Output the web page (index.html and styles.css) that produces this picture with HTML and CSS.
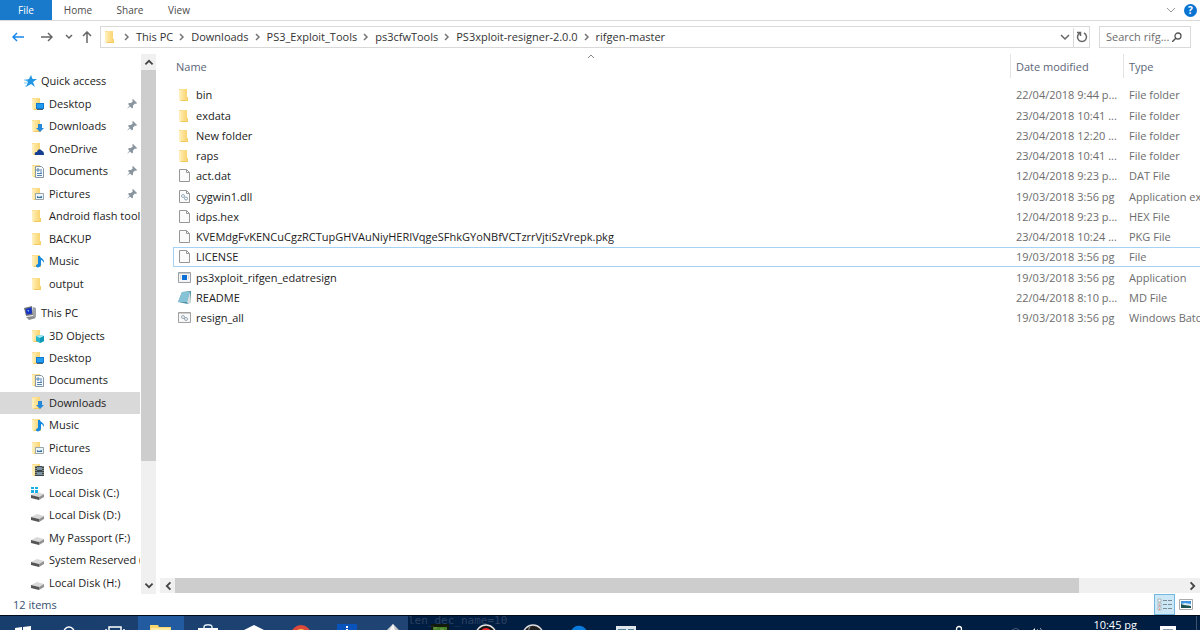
FILE: index.html
```html
<!DOCTYPE html>
<html lang="en">
<head>
    <meta charset="UTF-8">
    <meta name="viewport" content="width=device-width, initial-scale=1.0">
    <title>rifgen-master</title>
    <link rel="stylesheet" href="styles.css">
</head>
<body>
    <!-- shared icons -->
    <svg class="sprite" aria-hidden="true">
        <defs>
            <linearGradient id="gold" x1="0" x2="1"><stop offset="0" stop-color="#ffe9a6"/><stop offset="1" stop-color="#f8d169"/></linearGradient>
            <linearGradient id="steel" x1="0" y1="0" x2="1" y2="1"><stop offset="0" stop-color="#f2f2f2"/><stop offset="1" stop-color="#a5a5a5"/></linearGradient>
        </defs>
        <symbol id="folder" viewBox="0 0 14 14"><path d="M1 1h8v8h1v4H2z" fill="#f3c85c"/><path d="M3 1h6v8h1v3H3z" fill="url(#gold)"/><path d="M1 1l2 1v11l-2-1z" fill="#ffeeb8"/></symbol>
        <symbol id="desktop" viewBox="0 0 14 14"><use href="#folder"/><path d="M5 6h8v6H5z" fill="#1279cf"/><path d="M6 7h6v4H6z" fill="#1f9bf0"/><path d="M6 12h6v1H6z" fill="#47637a"/></symbol>
        <symbol id="downloads" viewBox="0 0 14 14"><use href="#folder"/><path d="M7 5h4v4h2l-4 4-4-4h2z" fill="#2588d8"/></symbol>
        <symbol id="onedrive" viewBox="0 0 14 14"><use href="#folder"/><path d="M4 13c-1-3 1-3 2-3 1-4 4-3 5-1 2 0 2 3 2 4z" fill="#173f91"/></symbol>
        <symbol id="documents" viewBox="0 0 14 14"><use href="#folder"/><path d="M4.500 2.500h6l2 2v9h-8z" fill="#f7fafc" stroke="#8797a5"/><path d="M6 5h2v2H6zM9 6h2M9 8h2M6 9.500h5M6 11.500h5" fill="none" stroke="#5684b4"/></symbol>
        <symbol id="pictures" viewBox="0 0 14 14"><use href="#folder"/><path d="M4.500 6.500h8v6h-8z" fill="#eaf5fc" stroke="#9aa5ab"/><path d="M6 11V9l2 1 3-1v2z" fill="#3a719a"/></symbol>
        <symbol id="music" viewBox="0 0 14 14"><use href="#folder"/><path d="M7 2h2c0 2 5 3 4 7-1-2-2-3-3-3v5c-1 3-5 3-5 1 0-1 1-2 2-2z" fill="#1688df"/></symbol>
        <symbol id="objects" viewBox="0 0 14 14"><use href="#folder"/><path d="M5 7l4-1 4 1v5l-4 2-4-2z" fill="#24b5cf"/><path d="M5 7l4-1 4 1-4 2z" fill="#a4ebf5"/><path d="M9 9l4-2v5l-4 2z" fill="#109ab8"/></symbol>
        <symbol id="videos" viewBox="0 0 14 14"><use href="#folder"/><path d="M4 3h9v10H4z" fill="#39444e"/><path d="M6 4h5v3H6zM6 9h5v3H6z" fill="#7993a4"/><path d="M5 3v10M12 3v10" stroke="#d9cf9c" stroke-dasharray="1 1"/></symbol>
        <symbol id="disk" viewBox="0 0 14 14"><path d="M0 9l6-3 7 2-5 3z" fill="#d9d9d9"/><path d="M0 9l8 2v3l-8-2z" fill="#555"/><path d="M8 11l5-3v3l-5 3z" fill="#929292"/></symbol>
        <symbol id="windisk" viewBox="0 0 14 14"><use href="#disk"/><path d="M0 1h3v2H0zM4 1h3v2H4zM0 4h3v3H0zM4 4h3v3H4z" fill="#17afe8"/></symbol>
        <symbol id="star" viewBox="0 0 14 14"><path d="M8 1l1.500 4H14l-4 3 2 5-4-3-5 3 2-5-3-2 4-1z" fill="#2196e5"/><path d="M1 6h4M1 9h3M2 12h2" stroke="#7fc6f2"/></symbol>
        <symbol id="pc" viewBox="0 0 14 14"><path d="M1 2l8-2 1 9-7 1z" fill="#6e7378"/><path d="M2.500 3l6-1.500.5 6-5.500 1z" fill="#1633c4"/><path d="M10 1l3 1v9l-3 1z" fill="#a2a5a8"/><path d="M3 11l7-1 3 2-7 2z" fill="#888c90"/><path d="M4 4l2 0v2z" fill="#7ec2ff"/></symbol>
        <symbol id="pin" viewBox="0 0 10 10"><path d="M6 0l4 4-1 1-1-.5-2 2v2l-1 1-2-2L0 10l2.500-3.500L1 5l1-1h2l2-2L5 1z" fill="#8a969f"/></symbol>
        <symbol id="page" viewBox="0 0 14 14"><path d="M1.500.5h7l3 3v9h-10z" fill="#fbfbfb" stroke="#979797"/><path d="M8.500.5v3h3" fill="none" stroke="#979797"/></symbol>
        <symbol id="dll" viewBox="0 0 14 14"><use href="#page"/><circle cx="5" cy="6" r="1.500" fill="none" stroke="#9aabb8"/><circle cx="8" cy="8.500" r="1.500" fill="none" stroke="#8da5b7"/></symbol>
        <symbol id="exe" viewBox="0 0 14 14"><path d="M.5 1.500h12v10H.5z" fill="#f4f4f4" stroke="#9aa0a4"/><path d="M1 2h11v1H1z" fill="#c2c9cf"/><path d="M4 4h5v5H4z" fill="#0b6fd6"/><path d="M10 5h1M10 7h1M2 5h1M2 7h1" stroke="#bbb"/></symbol>
        <symbol id="note" viewBox="0 0 14 14"><path d="M4 1l9-1v11l-3 2-10-2z" fill="#4b91a8"/><path d="M4 1l8 0-3 10-9 0z" fill="#86c3d6"/><path d="M12 1l1 10-3 2-1-2z" fill="#d9dfdf"/></symbol>
        <symbol id="batch" viewBox="0 0 14 14"><path d="M.5 1.500h12v10H.5z" fill="#f8f8f8" stroke="#a1a1a1"/><path d="M1 2h11v1H1z" fill="#cfcfcf"/><circle cx="5" cy="6" r="1.500" fill="none" stroke="#9aa8b3"/><circle cx="8" cy="8" r="1.500" fill="none" stroke="#9aa8b3"/></symbol>
        <symbol id="up" viewBox="0 0 10 10"><path d="M2 7l3-3 3 3" fill="none" stroke="currentColor" stroke-width="1.500"/></symbol>
        <symbol id="down" viewBox="0 0 10 10"><path d="M2 3l3 3 3-3" fill="none" stroke="currentColor" stroke-width="1.500"/></symbol>
        <symbol id="left" viewBox="0 0 10 10"><path d="M7 2L4 5l3 3" fill="none" stroke="currentColor" stroke-width="1.500"/></symbol>
        <symbol id="right" viewBox="0 0 10 10"><path d="M3 2l3 3-3 3" fill="none" stroke="currentColor" stroke-width="1.500"/></symbol>
    </svg>

    <header class="ribbon">
        <button class="tab tab-file">File</button>
        <button class="tab">Home</button>
        <button class="tab">Share</button>
        <button class="tab tab-view">View</button>
        <button class="expand" aria-label="Expand the ribbon"><svg viewBox="0 0 10 10"><path d="M1 3l4 4 4-4" fill="none" stroke="#999"/></svg></button>
        <button class="help" aria-label="Help">?</button>
    </header>

    <div class="toolbar">
        <div class="history">
            <button class="nav-btn back" aria-label="Back"><svg viewBox="0 0 12 12"><path d="M12 6H1M5 2L1 6l4 4" fill="none" stroke="currentColor" stroke-width="1.500"/></svg></button>
            <button class="nav-btn" aria-label="Forward"><svg viewBox="0 0 12 12"><path d="M0 6h11M7 2l4 4-4 4" fill="none" stroke="currentColor" stroke-width="1.500"/></svg></button>
            <button class="nav-btn recent" aria-label="Recent locations"><svg><use href="#down"/></svg></button>
            <button class="nav-btn" aria-label="Up"><svg viewBox="0 0 12 12"><path d="M6 12V1M2 5l4-4 4 4" fill="none" stroke="currentColor" stroke-width="1.500"/></svg></button>
        </div>
        <div class="address">
            <svg class="icon"><use href="#folder"/></svg>
            <nav class="crumbs" aria-label="Address">
                <svg class="sep"><use href="#right"/></svg><a href="#">This PC</a>
                <svg class="sep"><use href="#right"/></svg><a href="#">Downloads</a>
                <svg class="sep"><use href="#right"/></svg><a href="#">PS3_Exploit_Tools</a>
                <svg class="sep"><use href="#right"/></svg><a href="#">ps3cfwTools</a>
                <svg class="sep"><use href="#right"/></svg><a href="#">PS3xploit-resigner-2.0.0</a>
                <svg class="sep"><use href="#right"/></svg><a href="#">rifgen-master</a>
            </nav>
            <button class="address-btn" aria-label="Previous locations"><svg viewBox="0 0 10 10"><path d="M1 3l4 4 4-4" fill="none" stroke="#666" stroke-width="1.500"/></svg></button>
            <button class="address-btn refresh" aria-label="Refresh"><svg viewBox="0 0 12 12"><path d="M8 2a4.500 4.500 0 1 1-4 0M1 1.500h3.500V5" fill="none" stroke="#666" stroke-width="1.500"/></svg></button>
        </div>
        <div class="search">
            <input type="text" placeholder="Search rifg..." aria-label="Search rifgen-master">
            <svg viewBox="0 0 10 10"><circle cx="6" cy="4" r="3" fill="none" stroke="#555" stroke-width="1.300"/><path d="M4 6L0 10" stroke="#555" stroke-width="1.500"/></svg>
        </div>
    </div>

    <div class="window">
        <aside class="sidebar">
            <nav class="tree" aria-label="Folders">
                <ul class="group quick">
                    <li><a class="root" href="#"><svg class="icon"><use href="#star"/></svg>Quick access</a></li>
                    <li><a href="#"><svg class="icon"><use href="#desktop"/></svg>Desktop<svg class="pin"><use href="#pin"/></svg></a></li>
                    <li><a href="#"><svg class="icon"><use href="#downloads"/></svg>Downloads<svg class="pin"><use href="#pin"/></svg></a></li>
                    <li><a href="#"><svg class="icon"><use href="#onedrive"/></svg>OneDrive<svg class="pin"><use href="#pin"/></svg></a></li>
                    <li><a href="#"><svg class="icon"><use href="#documents"/></svg>Documents<svg class="pin"><use href="#pin"/></svg></a></li>
                    <li><a href="#"><svg class="icon"><use href="#pictures"/></svg>Pictures<svg class="pin"><use href="#pin"/></svg></a></li>
                    <li><a href="#"><svg class="icon"><use href="#folder"/></svg>Android flash tool</a></li>
                    <li><a href="#"><svg class="icon"><use href="#folder"/></svg>BACKUP</a></li>
                    <li><a href="#"><svg class="icon"><use href="#music"/></svg>Music</a></li>
                    <li><a href="#"><svg class="icon"><use href="#folder"/></svg>output</a></li>
                </ul>
                <ul class="group computer">
                    <li><a class="root" href="#"><svg class="icon"><use href="#pc"/></svg>This PC</a></li>
                    <li><a href="#"><svg class="icon"><use href="#objects"/></svg>3D Objects</a></li>
                    <li><a href="#"><svg class="icon"><use href="#desktop"/></svg>Desktop</a></li>
                    <li><a href="#"><svg class="icon"><use href="#documents"/></svg>Documents</a></li>
                    <li><a class="current" href="#"><svg class="icon"><use href="#downloads"/></svg>Downloads</a></li>
                    <li><a href="#"><svg class="icon"><use href="#music"/></svg>Music</a></li>
                    <li><a href="#"><svg class="icon"><use href="#pictures"/></svg>Pictures</a></li>
                    <li><a href="#"><svg class="icon"><use href="#videos"/></svg>Videos</a></li>
                    <li><a href="#"><svg class="icon"><use href="#windisk"/></svg>Local Disk (C:)</a></li>
                    <li><a href="#"><svg class="icon"><use href="#disk"/></svg>Local Disk (D:)</a></li>
                    <li><a href="#"><svg class="icon"><use href="#disk"/></svg>My Passport (F:)</a></li>
                    <li><a href="#"><svg class="icon"><use href="#disk"/></svg>System Reserved (G:)</a></li>
                    <li><a href="#"><svg class="icon"><use href="#disk"/></svg>Local Disk (H:)</a></li>
                </ul>
            </nav>
            <div class="scroll scroll-y">
                <button aria-label="Scroll up"><svg><use href="#up"/></svg></button>
                <div class="track"><div class="thumb"></div></div>
                <button aria-label="Scroll down"><svg><use href="#down"/></svg></button>
            </div>
        </aside>

        <main class="content">
            <table class="files">
                <colgroup><col><col class="col-date"><col class="col-type"></colgroup>
                <thead>
                    <tr>
                        <th>Name<svg class="sort" viewBox="0 0 8 5"><path d="M1 4l3-3 3 3" fill="none" stroke="#888"/></svg></th>
                        <th>Date modified</th>
                        <th>Type</th>
                    </tr>
                </thead>
                <tbody>
                    <tr><td><svg class="icon"><use href="#folder"/></svg>bin</td><td>22/04/2018 9:44 p...</td><td>File folder</td></tr>
                    <tr><td><svg class="icon"><use href="#folder"/></svg>exdata</td><td>23/04/2018 10:41 ...</td><td>File folder</td></tr>
                    <tr><td><svg class="icon"><use href="#folder"/></svg>New folder</td><td>23/04/2018 12:20 ...</td><td>File folder</td></tr>
                    <tr><td><svg class="icon"><use href="#folder"/></svg>raps</td><td>23/04/2018 10:41 ...</td><td>File folder</td></tr>
                    <tr><td><svg class="icon"><use href="#page"/></svg>act.dat</td><td>12/04/2018 9:23 p...</td><td>DAT File</td></tr>
                    <tr><td><svg class="icon"><use href="#dll"/></svg>cygwin1.dll</td><td>19/03/2018 3:56 pg</td><td>Application extension</td></tr>
                    <tr><td><svg class="icon"><use href="#page"/></svg>idps.hex</td><td>12/04/2018 9:23 p...</td><td>HEX File</td></tr>
                    <tr><td><svg class="icon"><use href="#page"/></svg>KVEMdgFvKENCuCgzRCTupGHVAuNiyHERIVqgeSFhkGYoNBfVCTzrrVjtiSzVrepk.pkg</td><td>23/04/2018 10:24 ...</td><td>PKG File</td></tr>
                    <tr class="focused"><td><svg class="icon"><use href="#page"/></svg>LICENSE</td><td>19/03/2018 3:56 pg</td><td>File</td></tr>
                    <tr><td><svg class="icon"><use href="#exe"/></svg>ps3xploit_rifgen_edatresign</td><td>19/03/2018 3:56 pg</td><td>Application</td></tr>
                    <tr><td><svg class="icon"><use href="#note"/></svg>README</td><td>22/04/2018 8:10 p...</td><td>MD File</td></tr>
                    <tr><td><svg class="icon"><use href="#batch"/></svg>resign_all</td><td>19/03/2018 3:56 pg</td><td>Windows Batch File</td></tr>
                </tbody>
            </table>
            <div class="scroll scroll-x">
                <button aria-label="Scroll left"><svg><use href="#left"/></svg></button>
                <div class="track"><div class="thumb"></div></div>
                <button aria-label="Scroll right"><svg><use href="#right"/></svg></button>
            </div>
        </main>
    </div>

    <footer class="status">
        <span>12 items</span>
        <button class="view active" aria-label="Details view"><svg viewBox="0 0 16 14"><path d="M1 1h3v3H1zM1 5h3v3H1zM1 9h3v3H1z" fill="#fff" stroke="#a9b4ba"/><path d="M2 7h1M2 11h1" stroke="#d65f4e"/><path d="M6 2.500h4M11 2.500h4M6 6.500h4M11 6.500h4M6 10.500h4M11 10.500h4" stroke="#7c8d97"/></svg></button>
        <button class="view" aria-label="Large icons view"><svg viewBox="0 0 16 14"><path d="M1.500 1.500h13v10h-13z" fill="#fff" stroke="#aaa"/><path d="M3 3h10v7H3z" fill="#3e93dc"/><path d="M3 6l4-1 6 1v2H3z" fill="#d5eefa"/><path d="M3 6l3 1 7 1v2H3z" fill="#1e514f"/></svg></button>
    </footer>

    <div class="taskbar">
        <div class="system">
            <button aria-label="Start"><svg viewBox="0 0 24 24"><path d="M4 4l7-1v8H4zM12 3l8-1v9h-8z" fill="#fff"/></svg></button>
            <button aria-label="Search"><svg viewBox="0 0 24 24"><circle cx="12" cy="8" r="5" fill="none" stroke="#fff" stroke-width="1.500"/></svg></button>
            <button aria-label="Task view"><svg viewBox="0 0 24 24"><path d="M6 3h12v10H6zM3 5v7M21 5v7" fill="none" stroke="#fff" stroke-width="1.500"/></svg></button>
        </div>
        <div class="apps">
            <button class="open" aria-label="File Explorer"><svg viewBox="0 0 24 24"><path d="M1 1h8l1 2h12v12H1z" fill="#f8d66e"/><path d="M2 4h19v10H2z" fill="#ffeaa3"/></svg></button>
            <button aria-label="Store"><svg viewBox="0 0 24 24"><path d="M8 5V3c0-3 8-3 8 0v2" fill="none" stroke="#dce8f3" stroke-width="1.500"/><path d="M2 4h20v12H2z" fill="#fff"/></svg></button>
            <button aria-label="Packages"><svg viewBox="0 0 24 24"><path d="M2 6l10-5 10 5v10H2z" fill="#fff"/></svg></button>
            <button aria-label="Chrome"><svg viewBox="0 0 24 24"><circle cx="12" cy="11" r="10" fill="#df493c"/><circle cx="12" cy="11" r="6" fill="#f5d052"/><circle cx="12" cy="12" r="5" fill="#f5f5f5"/></svg></button>
            <button aria-label="Information"><svg viewBox="0 0 24 24"><path d="M2 0h20v20H2z" fill="#0953bd"/><path d="M11 2h2v2h-2zM11 5h2v9h-2z" fill="#fff"/></svg></button>
            <button aria-label="Utility"><svg viewBox="0 0 24 24"><path d="M12 0l10 10H2z" fill="url(#steel)"/><path d="M12 0l3 10H7z" fill="#f6f6f6"/></svg></button>
            <button aria-label="Game"><svg viewBox="0 0 24 24"><path d="M3 0h18v18H3z" fill="#121a0c"/><path d="M5 3h14v4H5z" fill="#467d29"/><path d="M5 7h3v3h3V7h3v4h5v5H5z" fill="#69472b"/><path d="M6 4h3M12 5h4" stroke="#71a54c"/></svg></button>
            <button aria-label="Recorder"><svg viewBox="0 0 24 24"><circle cx="12" cy="11" r="10" fill="#141414" stroke="#e4e4e4" stroke-width="1.500"/><circle cx="12" cy="10" r="6" fill="#ee2b2b"/></svg></button>
            <button aria-label="Studio"><svg viewBox="0 0 24 24"><circle cx="12" cy="11" r="10" fill="#202020" stroke="#ddd" stroke-width="1.500"/><path d="M9 3c-3 3 0 7 4 7" fill="none" stroke="#aaa"/></svg></button>
            <button aria-label="Edge"><svg viewBox="0 0 24 24"><path d="M3 11c1-13 18-12 18 1H9c0-7 7-5 7-2" fill="#087bdc"/></svg></button>
            <button aria-label="Console"><svg viewBox="0 0 24 24"><path d="M2 2h20v16H2z" fill="#dfe6eb"/><path d="M4 5h8v4H4zM14 5h6v8h-6z" fill="#51809d"/></svg></button>
        </div>
        <span class="wallpaper">len_dec_name=10</span>
        <div class="tray">
            <svg class="tray-icon people" viewBox="0 0 16 16"><circle cx="8" cy="5" r="2.500" fill="none" stroke="#fff" stroke-width="1.300"/><path d="M3 13c0-5 10-5 10 0" fill="none" stroke="#fff"/></svg>
            <svg class="tray-icon" viewBox="0 0 16 16"><path d="M4 7c3-3 6-3 8-1M6 9c2-2 4-2 5 0" fill="none" stroke="#53647d"/></svg>
            <svg class="tray-icon" viewBox="0 0 16 16"><path d="M2 7h2l3-3v8L4 9H2z" fill="#fff"/><path d="M9 5c2 2 2 3 0 5M12 4c2 2 2 4 0 7" fill="none" stroke="#aab4c3"/></svg>
            <time class="clock">10:45 pg</time>
            <button class="notices" aria-label="Notifications"><svg viewBox="0 0 16 16"><path d="M0 2h16v14H0z" fill="#fff"/><path d="M3 6h10M3 9h10" stroke="#203b5d"/></svg></button>
        </div>
    </div>
</body>
</html>
```
FILE: styles.css
```css
* {
    box-sizing: border-box;
}
body {
    margin: 0;
    height: 100vh;
    display: flex;
    flex-direction: column;
    overflow: hidden;
    background: #fff;
    color: #1c1c1c;
    font-family: "Open Sans", "Noto Sans", sans-serif;
    font-size: 11px;
    line-height: 20px;
}
button {
    display: flex;
    align-items: center;
    justify-content: center;
    padding: 0;
    border: 0;
    background: none;
    color: inherit;
    font: inherit;
}
a {
    color: inherit;
    text-decoration: none;
}
svg {
    flex: none;
    display: block;
}
.sprite {
    position: absolute;
    width: 0;
    height: 0;
}
.icon {
    width: 14px;
    height: 14px;
}

/* ribbon */
.ribbon {
    display: flex;
    align-items: center;
    height: 21px;
    flex: none;
    padding-right: 3px;
    border-bottom: 1px solid #dadada;
}
.tab {
    width: 52px;
    height: 20px;
    color: #4b4b4b;
    font-size: 10px;
}
.tab-file {
    background: #1979ca;
    color: #fff;
}
.tab-view {
    width: 46px;
}
.expand {
    width: 10px;
    margin-left: auto;
    margin-right: 8px;
}
.expand svg {
    width: 10px;
    height: 10px;
}
.help {
    width: 13px;
    height: 13px;
    border-radius: 50%;
    background: #0873d1;
    color: #fff;
    font-size: 10px;
    font-weight: bold;
    line-height: 12px;
}

/* navigation and address */
.toolbar {
    display: flex;
    flex: none;
    height: 33px;
    padding: 5px 9px 6px 0;
}
.history {
    display: flex;
    align-items: center;
    width: 100px;
    padding-left: 12px;
    gap: 17px;
    color: #666;
}
.nav-btn svg {
    width: 12px;
    height: 12px;
}
.back {
    color: #1685ec;
}
.nav-btn.recent svg {
    width: 10px;
    height: 10px;
}
.recent {
    margin: 0 -10px 0 -6px;
}
.address {
    display: flex;
    flex: 1;
    align-items: center;
    min-width: 0;
    border: 1px solid #d9d9d9;
    padding-left: 3px;
}
.crumbs {
    display: flex;
    flex: 1;
    align-items: center;
    overflow: hidden;
    white-space: nowrap;
    color: #333;
}
.sep {
    width: 10px;
    height: 10px;
    margin: 0 4px;
    color: #777;
}
.address-btn {
    width: 16px;
    height: 19px;
}
.address-btn svg {
    width: 10px;
    height: 10px;
}
.refresh {
    border-left: 1px solid #d9d9d9;
}
.refresh svg {
    width: 12px;
    height: 12px;
}
.search {
    display: flex;
    align-items: center;
    width: 92px;
    margin-left: 9px;
    padding: 0 8px 0 6px;
    border: 1px solid #d9d9d9;
}
.search input {
    flex: 1;
    min-width: 0;
    padding: 0;
    border: 0;
    outline: 0;
    font: inherit;
}
.search input::placeholder {
    color: #6d6d6d;
}
.search svg {
    width: 10px;
    height: 10px;
}

/* folder tree */
.window {
    display: flex;
    flex: 1;
    min-height: 0;
}
.sidebar {
    display: flex;
    width: 156px;
    flex: none;
}
.tree {
    display: flex;
    flex-direction: column;
    flex: 1;
    min-width: 0;
    gap: 7px;
    padding-top: 16px;
}
.group {
    display: flex;
    flex-direction: column;
    margin: 0;
    padding: 0;
    list-style: none;
}
.quick {
    flex: 10 1 0;
}
.computer {
    flex: 13 1 0;
}
.group li {
    flex: 1 1 0;
    min-height: 0;
}
.group a {
    display: flex;
    align-items: center;
    gap: 4px;
    height: 100%;
    margin-right: 1px;
    padding-left: 31px;
    overflow: hidden;
    white-space: nowrap;
}
.group .root {
    padding-left: 23px;
}
.group .current {
    background: #d9d9d9;
}
.pin {
    width: 10px;
    height: 10px;
    margin-left: auto;
    margin-right: 3px;
}

/* scroll bars */
.scroll {
    display: flex;
    flex: none;
    background: #f0f0f0;
    color: #444;
}
.scroll svg {
    width: 12px;
    height: 12px;
}
.track {
    flex: 1;
}
.thumb {
    background: #cdcdcd;
}
.scroll-y {
    flex-direction: column;
    width: 15px;
}
.scroll-y button {
    height: 16px;
}
.scroll-y .thumb {
    height: 77%;
}
.scroll-x {
    height: 15px;
    margin: auto 0 1px 4px;
}
.scroll-x button {
    width: 15px;
}
.scroll-x .thumb {
    width: 89.5%;
    height: 100%;
}

/* file list */
.content {
    display: flex;
    flex-direction: column;
    flex: 1;
    min-width: 0;
}
.files {
    width: calc(100% - 17px);
    margin-left: 17px;
    table-layout: fixed;
    border-collapse: separate;
    border-spacing: 0;
}
.col-date {
    width: 113px;
}
.col-type {
    width: 77px;
}
.files th {
    position: relative;
    height: 24px;
    padding: 1px 0 0 5px;
    border-left: 1px solid #e3e3e3;
    color: #5b6678;
    font-weight: normal;
    text-align: left;
    white-space: nowrap;
}
.files th:first-child {
    padding-left: 3px;
    border-left: 0;
}
.sort {
    position: absolute;
    top: 0;
    left: 50%;
    width: 8px;
    height: 5px;
    margin-left: -5px;
}
.files tbody::before {
    content: "";
    display: block;
    height: 7px;
}
.files td {
    height: 20px;
    padding: 0 0 0 6px;
    overflow: hidden;
    color: #6d6d6d;
    line-height: 18px;
    white-space: nowrap;
}
.files tr:nth-child(4n+2) td {
    height: 21px;
}
.files td:first-child {
    padding-left: 5px;
    color: #1c1c1c;
}
.files td .icon {
    display: inline-block;
    margin-right: 4px;
    vertical-align: -3px;
}
.files .focused td {
    border: 1px solid #a6d3f3;
    border-width: 1px 0;
}
.files .focused td:first-child {
    padding-left: 4px;
    border-left-width: 1px;
}

/* status bar */
.status {
    display: flex;
    flex: none;
    align-items: center;
    height: 21px;
    padding: 0 4px 0 13px;
    color: #35506f;
}
.view {
    width: 21px;
    height: 21px;
    border: 1px solid transparent;
}
.view.active {
    margin-left: auto;
    border-color: #70b8e0;
    background: #cce8f6;
}
.view svg {
    width: 16px;
    height: 14px;
}

/* taskbar, cut off by the bottom of the screen */
.taskbar {
    position: relative;
    display: flex;
    flex: none;
    height: 15px;
    overflow: hidden;
    border-top: 1px solid #000b1e;
    background: linear-gradient(90deg, #183e6d 0, #204574 408px, #001d42 408px);
    color: #fff;
}
.system {
    display: grid;
    grid-template-columns: repeat(3, 1fr);
    width: 138px;
}
.apps {
    display: grid;
    grid-template-columns: repeat(11, 1fr);
    width: 511px;
}
.taskbar button {
    align-items: flex-start;
    height: 40px;
    padding-top: 8px;
}
.taskbar button svg {
    width: 24px;
    height: 24px;
}
.taskbar .open {
    background: #225b9f;
}
.wallpaper {
    position: absolute;
    top: -2px;
    left: 408px;
    color: #2b4263;
    font-family: "DejaVu Sans Mono", monospace;
    font-size: 11px;
    line-height: 14px;
}
.tray {
    display: flex;
    align-items: flex-start;
    margin-left: auto;
    margin-right: 3px;
    border-right: 1px solid #40546e;
}
.tray-icon {
    width: 16px;
    height: 16px;
    margin-top: 8px;
    margin-right: 5px;
}
.people {
    margin-right: 40px;
}
.clock {
    margin-left: 44px;
    line-height: 18px;
}
.taskbar .notices {
    width: 16px;
    margin: 0 20px 0 23px;
}
.taskbar .notices svg {
    width: 16px;
    height: 16px;
}
```
